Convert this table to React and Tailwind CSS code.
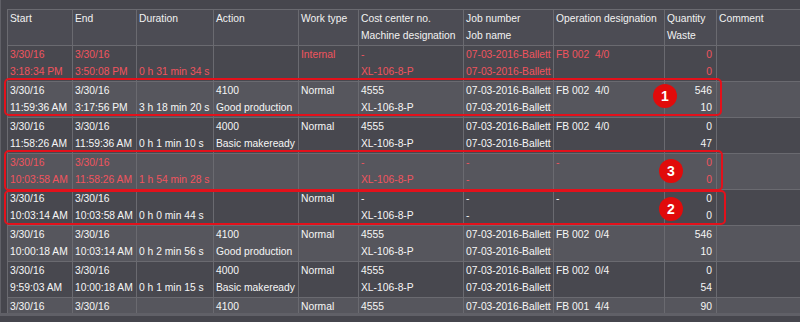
import React from "react";

const GRID =
  "grid grid-cols-[65px_64px_77px_85px_60px_105px_90px_111px_52px_1fr]";

const HEADER = [
  ["Start", ""],
  ["End", ""],
  ["Duration", ""],
  ["Action", ""],
  ["Work type", ""],
  ["Cost center no.", "Machine designation"],
  ["Job number", "Job name"],
  ["Operation designation", ""],
  ["Quantity", "Waste"],
  ["Comment", ""],
];

const J = "07-03-2016-Ballett";
const XL = "XL-106-8-P";

const ROWS = [
  {
    red: true,
    light: false,
    c: [
      ["3/30/16", "3:18:34 PM"],
      ["3/30/16", "3:50:08 PM"],
      ["", "0 h 31 min 34 s"],
      ["", ""],
      ["Internal", ""],
      ["-", XL],
      [J, J],
      ["FB 002  4/0", ""],
      ["0", "0"],
      ["", ""],
    ],
  },
  {
    red: false,
    light: true,
    c: [
      ["3/30/16", "11:59:36 AM"],
      ["3/30/16", "3:17:56 PM"],
      ["", "3 h 18 min 20 s"],
      ["4100", "Good production"],
      ["Normal", ""],
      ["4555", XL],
      [J, J],
      ["FB 002  4/0", ""],
      ["546", "10"],
      ["", ""],
    ],
  },
  {
    red: false,
    light: false,
    c: [
      ["3/30/16", "11:58:26 AM"],
      ["3/30/16", "11:59:36 AM"],
      ["", "0 h 1 min 10 s"],
      ["4000", "Basic makeready"],
      ["Normal", ""],
      ["4555", XL],
      [J, J],
      ["FB 002  4/0", ""],
      ["0", "47"],
      ["", ""],
    ],
  },
  {
    red: true,
    light: true,
    c: [
      ["3/30/16", "10:03:58 AM"],
      ["3/30/16", "11:58:26 AM"],
      ["", "1 h 54 min 28 s"],
      ["", ""],
      ["", ""],
      ["-", XL],
      ["-", "-"],
      ["-", ""],
      ["0", "0"],
      ["", ""],
    ],
  },
  {
    red: false,
    light: false,
    c: [
      ["3/30/16", "10:03:14 AM"],
      ["3/30/16", "10:03:58 AM"],
      ["", "0 h 0 min 44 s"],
      ["", ""],
      ["Normal", ""],
      ["-", XL],
      ["-", "-"],
      ["-", ""],
      ["0", "0"],
      ["", ""],
    ],
  },
  {
    red: false,
    light: true,
    c: [
      ["3/30/16", "10:00:18 AM"],
      ["3/30/16", "10:03:14 AM"],
      ["", "0 h 2 min 56 s"],
      ["4100", "Good production"],
      ["Normal", ""],
      ["4555", XL],
      [J, J],
      ["FB 002  0/4", ""],
      ["546", "10"],
      ["", ""],
    ],
  },
  {
    red: false,
    light: false,
    c: [
      ["3/30/16", "9:59:03 AM"],
      ["3/30/16", "10:00:18 AM"],
      ["", "0 h 1 min 15 s"],
      ["4000", "Basic makeready"],
      ["Normal", ""],
      ["4555", XL],
      [J, J],
      ["FB 002  0/4", ""],
      ["0", "54"],
      ["", ""],
    ],
  },
  {
    red: false,
    light: true,
    c: [
      ["3/30/16", ""],
      ["3/30/16", ""],
      ["", ""],
      ["4100", ""],
      ["Normal", ""],
      ["4555", ""],
      [J, ""],
      ["FB 001  4/4", ""],
      ["90", ""],
      ["", ""],
    ],
  },
];

function Cell({ lines, right }) {
  return (
    <div
      className={`h-[36px] overflow-hidden border-r border-b border-[#6a6a70] pl-[2px] ${
        right ? "pr-[4px] text-right" : ""
      }`}
    >
      <div className="h-[17px] whitespace-pre leading-[17px]">{lines[0]}</div>
      <div className="h-[17px] whitespace-pre leading-[17px]">{lines[1]}</div>
    </div>
  );
}

function Box({ className }) {
  return (
    <div
      className={`pointer-events-none absolute rounded-[5px] border-2 border-[#e3111b] ${className}`}
    />
  );
}

function Badge({ n, className }) {
  return (
    <div
      className={`absolute flex h-[24px] w-[24px] items-center justify-center rounded-full bg-[#e10b0b] text-[14px] font-bold leading-none text-white ${className}`}
    >
      {n}
    </div>
  );
}

export default function App() {
  return (
    <div className="relative h-[322px] w-[800px] overflow-hidden bg-[#46464d] font-['Liberation_Sans',Arial,sans-serif] text-[10.3px]">
      <div className="h-[316px] overflow-hidden border-b-[3px] border-l border-[#606067] pl-[6px] pt-[9px]">
        <div className="w-[830px] border-l border-t border-[#6a6a70]">
          <div className={`${GRID} bg-[#4c4c54] text-[#f2f2f2]`}>
            {HEADER.map((h, i) => (
              <Cell key={i} lines={h} />
            ))}
          </div>
          {ROWS.map((r, ri) => (
            <div
              key={ri}
              className={`${GRID} ${r.light ? "bg-[#56565d]" : "bg-[#48484f]"} ${
                r.red ? "text-[#f0545e]" : "text-[#f6f6f6]"
              }`}
            >
              {r.c.map((c, ci) => (
                <Cell key={ci} lines={c} right={ci === 8} />
              ))}
            </div>
          ))}
        </div>
      </div>

      <Box className="left-[4px] top-[78px] h-[38px] w-[718px]" />
      <Box className="left-[4px] top-[150px] h-[41px] w-[719px]" />
      <Box className="left-[4px] top-[190px] h-[35px] w-[722px]" />

      <Badge n="1" className="left-[653px] top-[84px]" />
      <Badge n="3" className="left-[659px] top-[159px]" />
      <Badge n="2" className="left-[659px] top-[197px]" />
    </div>
  );
}
